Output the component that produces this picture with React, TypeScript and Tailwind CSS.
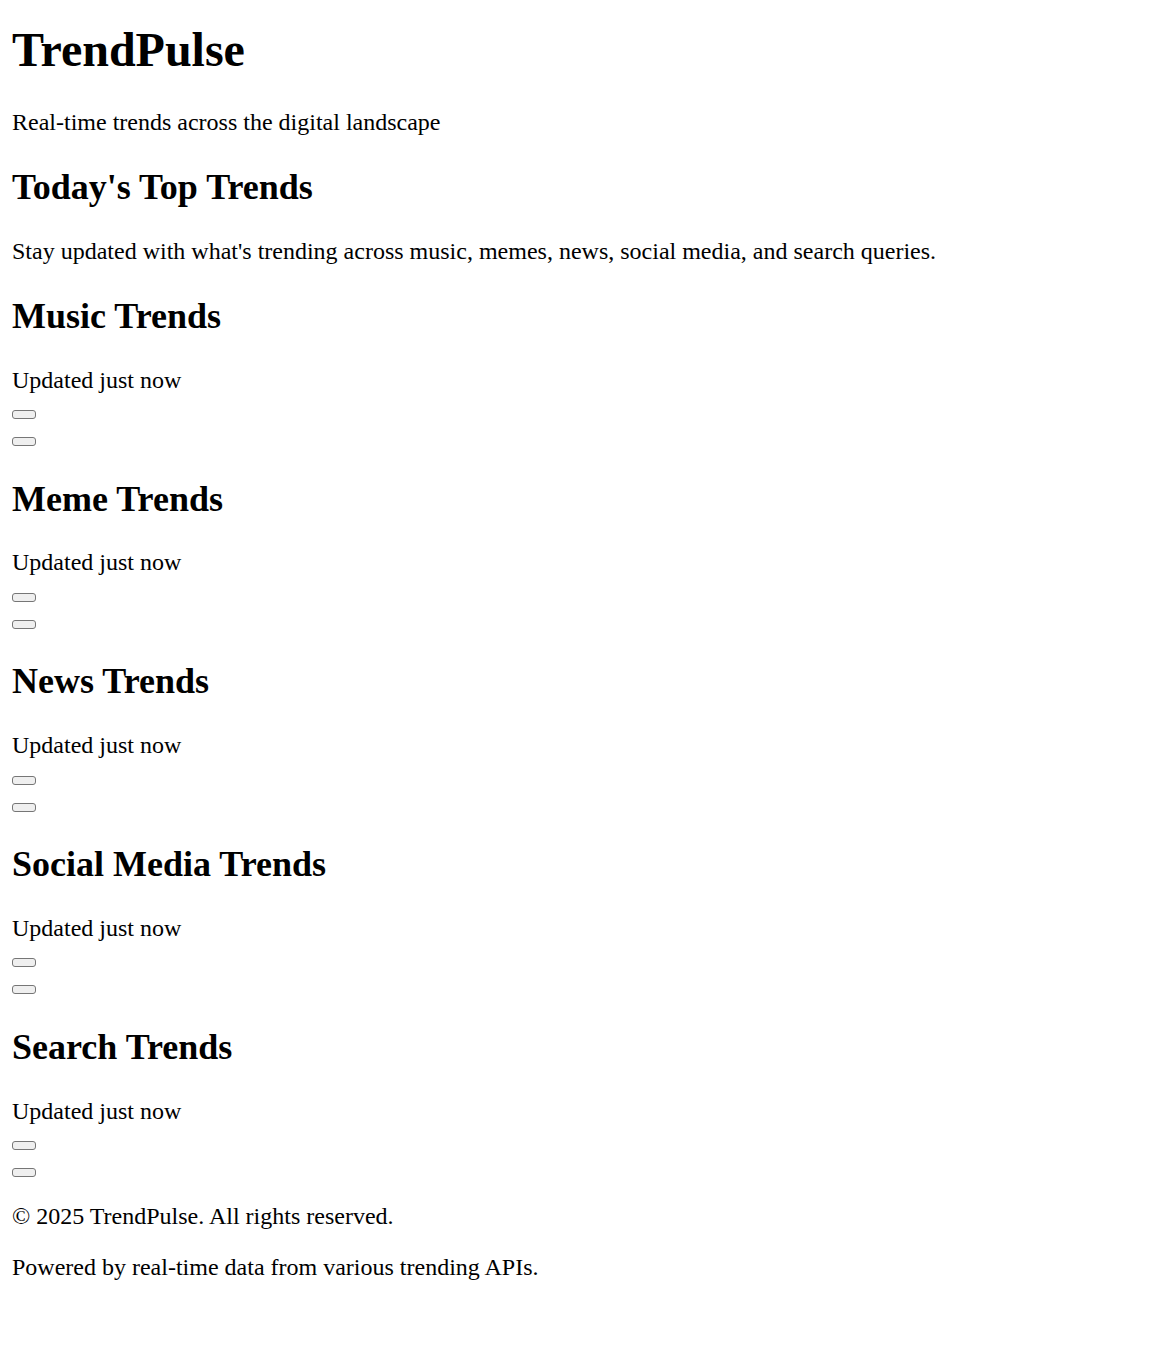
import React from 'react';

const sections = ['Music Trends', 'Meme Trends', 'News Trends', 'Social Media Trends', 'Search Trends'];

const Placeholder: React.FC = () => (
  <div>
    <span className="inline-block align-[-4.5px] w-[24px] h-[9px] rounded-[3px] border border-[#767676] bg-[#efefef]" />
  </div>
);

const App: React.FC = () => {
  return (
    <div className="bg-white text-black px-[12px] pb-[12px] font-['Liberation_Serif','Times_New_Roman',serif] text-[24px] leading-[normal]">
      <header>
        <h1 className="text-[48px] font-bold mt-[22px] mb-[32.16px]">TrendPulse</h1>
        <p className="my-[24px]">Real-time trends across the digital landscape</p>
      </header>

      <main>
        <section>
          <h2 className="text-[36px] font-bold my-[29.88px]">Today's Top Trends</h2>
          <p className="my-[24px]">
            Stay updated with what's trending across music, memes, news, social media, and search queries.
          </p>
        </section>

        {sections.map((title) => (
          <section key={title}>
            <h2 className="text-[36px] font-bold my-[29.88px]">{title}</h2>
            <div>Updated just now</div>
            <Placeholder />
            <Placeholder />
          </section>
        ))}
      </main>

      <footer>
        <p className="my-[24px]">© 2025 TrendPulse. All rights reserved.</p>
        <p className="my-[24px]">Powered by real-time data from various trending APIs.</p>
      </footer>
    </div>
  );
};

export default App;
